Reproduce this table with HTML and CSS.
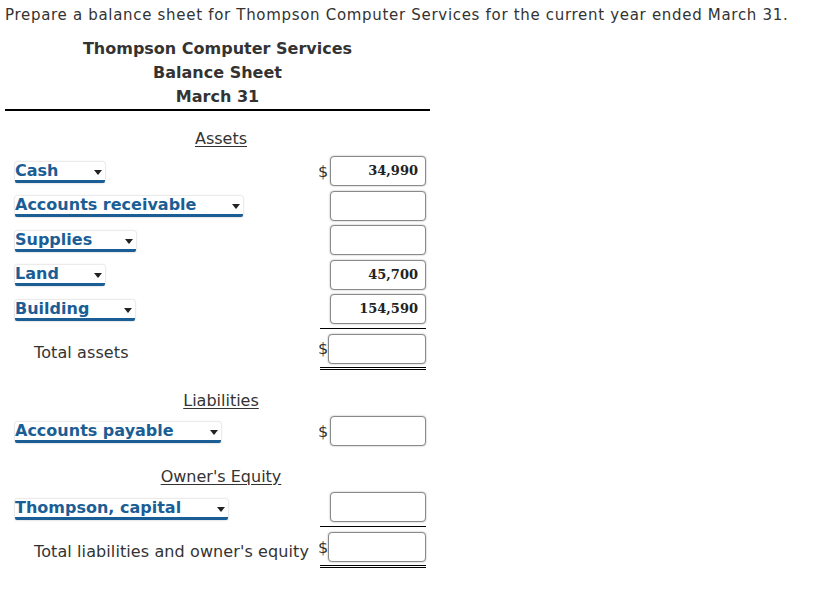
FILE: index.html
```html
<!DOCTYPE html>
<html>
<head>
<meta charset="utf-8">
<link rel="stylesheet" href="styles.css">
</head>
<body>
<p class="prompt">Prepare a balance sheet for Thompson Computer Services for the current year ended March 31.</p>
<div class="sheet">
  <div class="head">
    <div>Thompson Computer Services</div>
    <div>Balance Sheet</div>
    <div>March 31</div>
  </div>

  <div class="section"><span>Assets</span></div>
  <div class="row">
    <div class="label"><span class="sel w90">Cash</span></div>
    <div class="dollar">$</div>
    <div class="box">34,990</div>
  </div>
  <div class="row">
    <div class="label"><span class="sel w228">Accounts receivable</span></div>
    <div class="dollar"></div>
    <div class="box"></div>
  </div>
  <div class="row">
    <div class="label"><span class="sel w121">Supplies</span></div>
    <div class="dollar"></div>
    <div class="box"></div>
  </div>
  <div class="row">
    <div class="label"><span class="sel w90">Land</span></div>
    <div class="dollar"></div>
    <div class="box">45,700</div>
  </div>
  <div class="row">
    <div class="label"><span class="sel w120">Building</span></div>
    <div class="dollar"></div>
    <div class="box">154,590</div>
  </div>
  <div class="row total">
    <div class="label plain">Total assets</div>
    <div class="amt"><span class="dollar">$</span><div class="box"></div></div>
  </div>

  <div class="section sec-liab"><span>Liabilities</span></div>
  <div class="row">
    <div class="label"><span class="sel w206">Accounts payable</span></div>
    <div class="dollar">$</div>
    <div class="box"></div>
  </div>

  <div class="section sec-eq"><span>Owner's Equity</span></div>
  <div class="row">
    <div class="label"><span class="sel sel-low w213">Thompson, capital</span></div>
    <div class="dollar"></div>
    <div class="box"></div>
  </div>
  <div class="row total total-eq">
    <div class="label plain">Total liabilities and owner's equity</div>
    <div class="amt"><span class="dollar">$</span><div class="box"></div></div>
  </div>
</div>
</body>
</html>
```

FILE: styles.css
```css
* { box-sizing: border-box; }
html, body { margin: 0; padding: 0; background: #fff; }
body {
  font-family: "DejaVu Sans", Verdana, sans-serif;
  color: #333;
  padding: 0 5px;
}
.prompt {
  margin: 6px 0 0;
  font-size: 15px;
  line-height: 18px;
  letter-spacing: 0.69px;
  white-space: nowrap;
}
.sheet { width: 425px; }
.head {
  margin-top: 13px;
  text-align: center;
  font-weight: bold;
  font-size: 16px;
  line-height: 24px;
  border-bottom: 2px solid #000;
}
.section {
  margin-top: 16px;
  margin-bottom: 3px;
  padding-left: 7px;
  text-align: center;
  font-size: 16px;
  line-height: 24px;
}
.section span { text-decoration: underline; text-underline-offset: 2px; }
.sec-liab { margin-top: 17px; margin-bottom: 1px; }
.sec-eq { margin-top: 16px; margin-bottom: 1px; }
.row {
  display: grid;
  grid-template-columns: 1fr 12px 96px;
  align-items: center;
  padding: 2px 4px 2.5px 0;
}
.label { padding-left: 10px; font-size: 16px; }
.plain { padding-left: 29px; padding-top: 8px; letter-spacing: 0.1px; }
.dollar {
  font-size: 16px;
  color: #333;
  text-align: left;
  align-self: center;
}
.box {
  height: 30px;
  border: 1px solid #8a8a8a;
  border-radius: 4px;
  box-shadow: 0 0 2px rgba(0,0,0,0.35);
  background: #fff;
  font-family: "DejaVu Serif", Georgia, serif;
  font-weight: bold;
  font-size: 13px;
  color: #222;
  text-align: right;
  padding-right: 7px;
  line-height: 28px;
}
.sel {
  display: inline-block;
  position: relative;
  top: 1px;
  height: 21px;
  background: #fff;
  box-shadow: 0 0 2px rgba(0,0,0,0.3);
  border-radius: 2px;
  border-bottom: 3px solid #1b5e95;
  color: #1b5e95;
  font-weight: bold;
  font-size: 16px;
  line-height: 18px;
  vertical-align: middle;
}
.sel-low { top: 3px; }
.sel::after {
  content: "";
  position: absolute;
  right: 3px;
  top: 8px;
  border-left: 4px solid transparent;
  border-right: 4px solid transparent;
  border-top: 5px solid #222;
}
.w90 { width: 90px; }
.w120 { width: 120px; }
.w121 { width: 121px; }
.w206 { width: 206px; }
.w213 { width: 213px; }
.w228 { width: 228px; }
.total { padding-top: 1px; }
.total-eq { padding-top: 2px; }
.total .amt {
  grid-column: 2 / 4;
  display: flex;
  align-items: center;
  border-top: 1px solid #000;
  border-bottom: 3px double #000;
  margin-left: 2px;
  padding: 5px 0 3px;
}
.total .amt .dollar { width: 10px; margin-left: -2px; }
.total .amt .box { flex: 1; }
```
